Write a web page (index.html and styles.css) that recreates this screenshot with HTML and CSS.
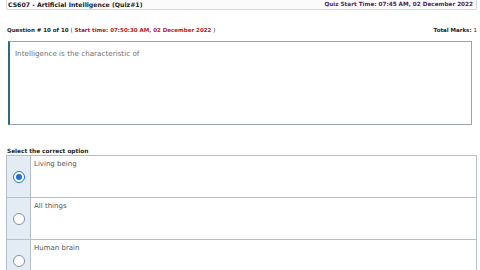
FILE: index.html
```html
<!DOCTYPE html>
<html>
<head>
<meta charset="utf-8">
<link rel="stylesheet" href="styles.css">
</head>
<body>
<div class="page">
  <div class="header">
    <span class="course">CS607 - Artificial Intelligence (Quiz#1)</span>
    <span class="quiz-time">Quiz Start Time: 07:45 AM, 02 December 2022</span>
  </div>
  <div class="qline">
    <span class="qnum">Question # 10 of 10 <span class="paren">(</span> <span class="start">Start time: 07:50:30 AM, 02 December 2022</span> <span class="paren">)</span></span>
    <span class="marks">Total Marks: <span class="mark-val">1</span></span>
  </div>
  <div class="question">Intelligence is the characteristic of</div>
  <div class="select-label">Select the correct option</div>
  <div class="options">
    <div class="option">
      <div class="radio-cell"><span class="radio checked"></span></div>
      <div class="opt-text">Living being</div>
    </div>
    <div class="option">
      <div class="radio-cell"><span class="radio"></span></div>
      <div class="opt-text">All things</div>
    </div>
    <div class="option">
      <div class="radio-cell"><span class="radio"></span></div>
      <div class="opt-text">Human brain</div>
    </div>
  </div>
</div>
</body>
</html>
```
FILE: styles.css
```css
html, body {
  margin: 0;
  padding: 0;
  background: #ffffff;
}
body {
  font-family: "DejaVu Sans", "Open Sans", sans-serif;
  color: #222;
  width: 480px;
  height: 270px;
  overflow: hidden;
}
.page {
  padding: 0 3px 0 6px;
}
.header {
  display: flex;
  justify-content: space-between;
  align-items: center;
  height: 10px;
  margin-top: -1px;
  padding: 0 3px 0 1px;
  border: 1px solid #d4d8de;
  border-top: none;
  border-radius: 0 0 2px 2px;
  background: #fbfbfc;
  font-size: 6.2px;
  font-weight: 700;
}
.course {
  color: #1c1c28;
}
.quiz-time {
  color: #5b1f52;
  font-size: 5.7px;
}
.qline {
  display: flex;
  justify-content: space-between;
  align-items: center;
  margin-top: 17px;
  padding: 0 0 0 1px;
  font-size: 5.5px;
  font-weight: 700;
  color: #1c1c28;
}
.start {
  color: #b2182b;
}
.paren {
  font-weight: 400;
}
.mark-val {
  font-weight: 400;
}
.question {
  margin: 8px 5px 0 2px;
  height: 68px;
  border: 1px solid #9aa3a8;
  border-left: 2px solid #2b6c85;
  padding: 7px 5px 7px;
  font-size: 7.2px;
  color: #707070;
}
.select-label {
  margin-top: 23px;
  padding-left: 1px;
  font-size: 5.8px;
  font-weight: 700;
  color: #1c1c28;
}
.options {
  margin-top: 1px;
  border: 1px solid #b7c0c8;
  border-bottom: none;
}
.option {
  display: flex;
  height: 41px;
  border-bottom: 1px solid #b7c0c8;
}
.radio-cell {
  width: 24px;
  flex: none;
  background: #e3ebf5;
  border-right: 1px solid #b7c0c8;
  display: flex;
  align-items: center;
  justify-content: center;
  box-sizing: border-box;
}
.radio {
  width: 12px;
  height: 12px;
  border-radius: 50%;
  border: 1px solid #8c8f94;
  background: #fff;
  box-sizing: border-box;
  position: relative;
}
.radio.checked {
  border-color: #1f6fd8;
}
.radio.checked::after {
  content: "";
  position: absolute;
  left: 2px;
  top: 2px;
  width: 6px;
  height: 6px;
  border-radius: 50%;
  background: #1f6fd8;
}
.opt-text {
  padding: 4px 0 0 3px;
  font-size: 7px;
  color: #555;
}
```
